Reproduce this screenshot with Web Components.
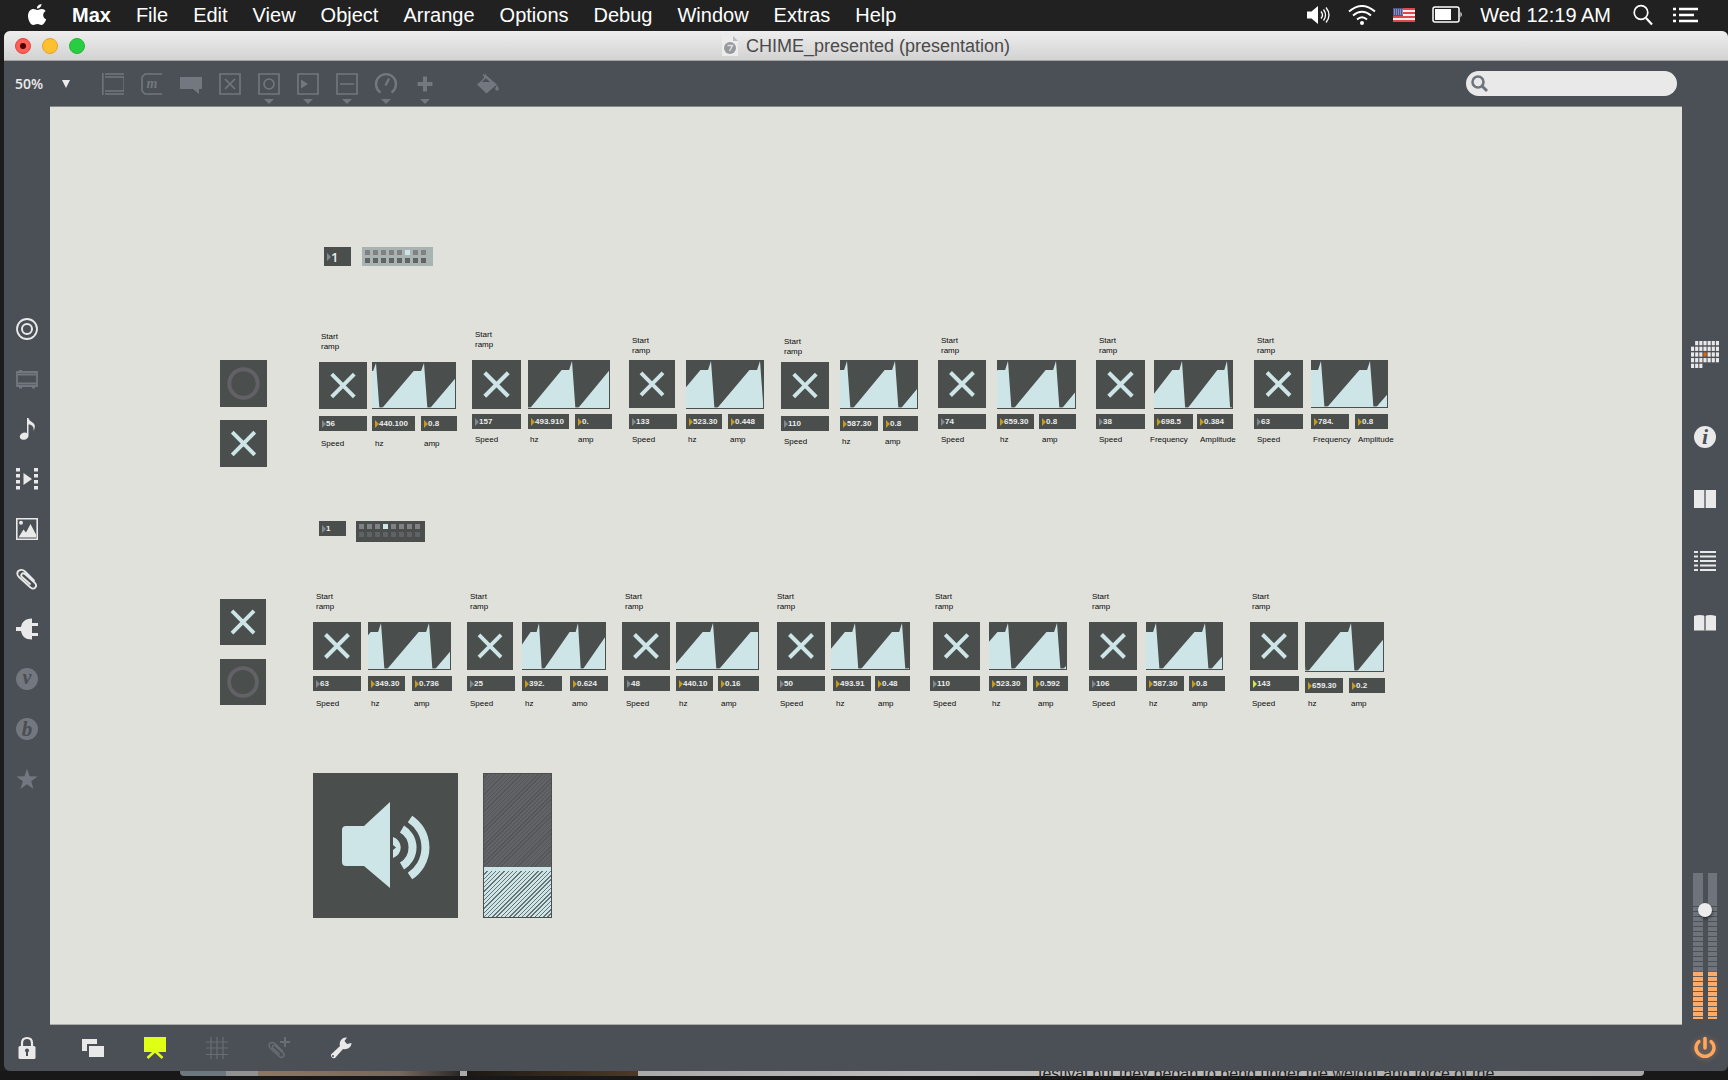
<!DOCTYPE html>
<html lang="en">
<head>
<meta charset="utf-8">
<title>CHIME_presented (presentation)</title>
<style>
html,body{margin:0;height:100%}
body{display:flex;flex-direction:column;background:#1c1c1c;overflow:hidden;font-family:"Liberation Sans",Arial,sans-serif}
max-window{flex:1;min-height:0}
</style>
</head>
<body>
<menu-bar></menu-bar>
<max-window>
  <title-bar slot="title">CHIME_presented (presentation)</title-bar>
  <tool-bar slot="tools"></tool-bar>
  <object-rail slot="left"></object-rail>
  <max-patcher slot="canvas"></max-patcher>
  <info-rail slot="right"></info-rail>
  <status-bar slot="status"></status-bar>
</max-window>
<desktop-peek>festival but they began to bend under the weight and force of the</desktop-peek>

<script>
const RESET = `:host,*{box-sizing:border-box}button,input,select{margin:0;padding:0;border:0;background:none;color:inherit;font:inherit;outline:0;appearance:none}svg{display:block}`;
const define = (name, html, setup) => customElements.define(name, class extends HTMLElement {
  connectedCallback(){
    if (this.shadowRoot) return;
    const root = this.attachShadow({mode:'open'});
    root.innerHTML = '<style>' + RESET + '</style>' + (typeof html === 'function' ? html(this) : html);
    if (setup) setup(this, root);
  }
});

const CLIP = '<path d="M18 12.500L9 3.500C6 .5 1 2 1.300 6C1.400 7 2 8 3 9L14.500 19.500C18 22.500 22 18.500 19 15L9 6C6.500 4 4 6.500 6 9L14 16" fill="none" stroke="currentColor" stroke-width="1.800" stroke-linecap="round"/>';
const letter = (ch, size, y, fill) => `<text x="11" y="${y}" text-anchor="middle" font-family="Liberation Serif,serif" font-style="italic" font-weight="700" font-size="${size}" fill="${fill}">${ch}</text>`;
const ICONS = {
  object:'<g fill="none" stroke="currentColor"><path d="M.8 0V22M3 1H22M3 4H22M3 18H22M3 21H22" stroke-width="1.500"/><path d="M21.500 4V18" stroke-width=".6"/></g>',
  message:'<path d="M21 1H4L1 4V18L4 21H21" fill="none" stroke="currentColor" stroke-width="1.500"/>' + letter('m', 14, 15, 'currentColor'),
  comment:'<path d="M0 4H22V16H19V21L13 16H0Z" fill="currentColor"/>',
  toggle:'<g fill="none" stroke="currentColor" stroke-width="1.600"><path d="M1 1H21V21H1ZM6 6L16 16M16 6L6 16"/></g>',
  button:'<g fill="none" stroke="currentColor" stroke-width="1.600"><path d="M1 1H21V21H1Z"/><circle cx="11" cy="11" r="5"/></g>',
  number:'<path d="M1 1H21V21H1Z" fill="none" stroke="currentColor" stroke-width="1.600"/><path d="M4 6.500V15.500L11 11Z" fill="currentColor"/>',
  slider:'<path d="M1 1H21V21H1ZM4 11H18" fill="none" stroke="currentColor" stroke-width="1.600"/>',
  dial:'<path d="M5.500 19.500A10 10 0 1 1 16.500 19.500M10.500 12.500L14 5.500" fill="none" stroke="currentColor" stroke-width="2.400"/>',
  plus:'<path d="M11 3.500V18.500M3.500 11H18.500" stroke="currentColor" stroke-width="4"/>',
  bucket:'<path d="M0 11.500L3 9H17L20 11.500L9.500 20.500Z" fill="currentColor"/><path d="M3 10L9.500 3.500L17 10M6 1.500L14 9M7 4.500L9 1" fill="none" stroke="currentColor" stroke-width="1.300"/><path d="M20 12C17.500 16 17.800 17.500 20 17.500S22.500 16 20 12Z" fill="currentColor"/>',
  target:'<g fill="none" stroke="currentColor"><circle cx="11" cy="11" r="10" stroke-width="1.800"/><circle cx="11" cy="11" r="5" stroke-width="2"/></g>',
  rack:'<path d="M1 4H21V18H1ZM2 6.500H20M2 15.500H20" fill="none" stroke="currentColor" stroke-width="1.800"/><path d="M3 3h3M3 19.500h3M16 19.500h3" stroke="currentColor" stroke-width="2"/>',
  note:'<path d="M11 0H12.500C13 4 19.500 4 18.800 9C18.500 11 18 12 17.500 13C18.500 8 15 6.500 12.500 6.500V17A4.500 3.600 -20 1 1 11 15Z" fill="currentColor"/>',
  film:'<path d="M0 0h4v3.500H0ZM0 6h4v3.500H0ZM0 12h4v3.500H0ZM0 18h4v3.500H0ZM18 0h4v3.500h-4ZM18 6h4v3.500h-4ZM18 12h4v3.500h-4ZM18 18h4v3.500h-4ZM7.500 5L16 11L7.500 17Z" fill="currentColor"/>',
  image:'<path d="M.8.8H21.200V21.200H.8Z" fill="none" stroke="currentColor" stroke-width="1.600"/><path d="M2.500 19.500L7.500 11.500L10 14.500L14.500 6L20 16.500V19.500Z" fill="currentColor"/><circle cx="5" cy="4.800" r="2" fill="currentColor"/>',
  clip:CLIP,
  plug:'<path d="M0 9H5C6 4 9 .5 16 .5V5H22V8H16V15H22V18H16V21.500C9 21.500 6 18 5 13H0Z" fill="currentColor"/>',
  vcircle:'<circle cx="11" cy="11" r="11" fill="currentColor"/>' + letter('v', 20, 16, '#4b4e55'),
  bcircle:'<circle cx="11" cy="11" r="11" fill="currentColor"/>' + letter('b', 21, 18, '#4b4e55'),
  star:'<path d="M11 .8L13.600 8.300L21.600 8.500L15.200 13.200L17.500 21L11 16.300L4.500 21L6.800 13.200L.4 8.500L8.400 8.300Z" fill="currentColor"/>',
  info:'<circle cx="11" cy="11" r="11" fill="currentColor"/>' + letter('i', 22, 18, '#4b4e55'),
  columns:'<path d="M0 2H10V20H0ZM12 2H22V20H12Z" fill="currentColor"/><path d="M11 2V20" stroke="#94979c" stroke-width="1.500"/>',
  list:'<path d="M0 2H4M6 2H22M0 6.500H4M6 6.500H22M0 11H4M6 11H22M0 15.500H4M6 15.500H22M0 20H4M6 20H22" stroke="currentColor" stroke-width="2"/>',
  book:'<path d="M0 4Q5 2.500 10 3.500V18.500H0ZM12 3.500Q17 2.500 22 4V18.500H12Z" fill="currentColor"/><path d="M11 4V19" stroke="#94979c" stroke-width="1.500"/>',
  lock:'<path d="M6 10V6Q6 1 11 1T16 6V10" fill="none" stroke="currentColor" stroke-width="2.200"/><rect x="2.500" y="9" width="17" height="13" rx="1.500" fill="currentColor"/><path d="M11 13V19" stroke="#4b4e55" stroke-width="2"/><circle cx="11" cy="13.500" r="2" fill="#4b4e55"/>',
  layers:'<path d="M0 2H15V7H5V14H0ZM7 9H22V20H7Z" fill="currentColor"/>',
  easel:'<path d="M0 0H22V15H0Z" fill="currentColor"/><path d="M11 14L3.500 21M11 14L18.500 21" stroke="currentColor" stroke-width="2.600"/>',
  grid:'<path d="M5 0V22M11 0V22M17 0V22M0 5H22M0 11H22M0 17.500H22" stroke="currentColor" stroke-width="1.200"/>',
  clipadd:'<g transform="translate(0 4) scale(.8)">'+CLIP+'</g><path d="M17 0V10M12 5H22" stroke="currentColor" stroke-width="2"/>',
  wrench:'<path d="M1 17.500L10 9C8.800 5 11.500 0 17 .5L14.500 4L17 7L21.500 6C21.500 10.500 17 13 13 12L5 21A3 3 0 0 1 1 17.500Z" fill="currentColor"/><circle cx="3" cy="19" r="1" fill="#4b4e55"/>',
  power:'<path d="M5 4.500A9 8.500 0 1 0 17 4.500" fill="none" stroke="currentColor" stroke-width="3.400" stroke-linecap="round"/><path d="M11 1.500V11" stroke="currentColor" stroke-width="3.600" stroke-linecap="round"/>'
};
const icon = (n, size = 22) => `<svg viewBox="0 0 22 22" width="${size}" height="${size}" overflow="visible" aria-hidden="true">${ICONS[n]}</svg>`;
const iconButton = ([n, label, tone]) => `<button class="${tone||''}" aria-label="${label}">${icon(n)}</button>`;

define('menu-bar', `<style>
:host{display:flex;justify-content:space-between;align-items:center;height:31px;flex:none;background:#212121;color:#fff;font-size:20px;line-height:24px;padding:0 30px 2px 27px}
nav,div{display:flex;align-items:center}
nav{gap:25px}
b{font-weight:700}
.apple{width:20px}
.status{gap:17px}
.clock{white-space:nowrap}
</style>
<nav aria-label="Menu">
<button class="apple" aria-label="Apple"><svg width="20" height="24" viewBox="0 0 20 24"><path d="M14.500 1C14.600 3.500 12.500 5.500 10 5.500C9.800 3.200 12 1.200 14.500 1ZM10.300 7C11.300 7 12.800 5.800 15 5.900C16.500 6 17.800 6.600 18.600 7.900C15 10 15.700 15 19.200 16.300C18.400 18.700 16.500 22 14.500 22C12.800 22 12.200 21 10.400 21C8.500 21 7.900 22 6.300 22C3.500 22 1 17 1 13C1 8.500 3.800 6 6.400 6C8.100 6 9.500 7 10.300 7Z" fill="#fff"/></svg></button>
<button><b>Max</b></button><button>File</button><button>Edit</button><button>View</button><button>Object</button><button>Arrange</button><button>Options</button><button>Debug</button><button>Window</button><button>Extras</button><button>Help</button></nav>
<div class="status">
<svg width="24" height="18" viewBox="0 0 24 18"><path d="M0 5.500H4.500L11 0V18L4.500 12.500H0Z" fill="#fff"/><path d="M14 5.500Q17 9 14 12.500M16.500 3.500Q20.500 9 16.500 14.500M19 1.500Q25 9 19 16.500" fill="none" stroke="#fff" stroke-width="1.300"/></svg>
<svg width="28" height="20" viewBox="0 0 28 20"><g fill="none" stroke="#fff" stroke-width="2"><path d="M1 6.500Q14-4.500 27 6.500M5 10.500Q14 3 23 10.500M9 14.500Q14 10 19 14.500"/></g><circle cx="14" cy="18" r="2" fill="#fff"/></svg>
<svg width="22" height="14" viewBox="0 0 22 14"><path fill="#f4f0f0" d="M0 0H22V14H0Z"/><path d="M0 1H22M0 5H22M0 9H22M0 13H22" stroke="#e0474c" stroke-width="2"/><path fill="#4f5490" d="M0 0H10V8H0Z"/><path d="M1 2H10M1 4H10M1 6H10" stroke="#c5c7e0" stroke-dasharray="1 1"/></svg>
<svg width="31" height="18" viewBox="0 0 31 18"><rect x="1" y="1" width="26" height="15" rx="2" fill="none" stroke="#fff" stroke-width="1.500"/><path d="M3 3H19V14H3ZM28.500 5.500Q31 8.500 28.500 11.500Z" fill="#fff"/></svg>
<span class="clock">Wed 12:19 AM</span>
<svg width="22" height="22" viewBox="0 0 22 22" style="margin-left:4px"><circle cx="9" cy="8.500" r="6.800" fill="none" stroke="#fff" stroke-width="1.700"/><path d="M14 14L20 20.500" stroke="#fff" stroke-width="2.200"/></svg>
<svg width="25" height="16" viewBox="0 0 25 16" style="margin-left:2px"><path d="M0 2H3M0 8H3M0 14H3M6 2H25M6 8H21M6 14H25" stroke="#fff" stroke-width="2.600"/></svg>
</div>`);

define('max-window', `<style>
:host{display:flex;flex-direction:column;margin-left:4px;border-radius:6px;overflow:hidden;background:#4b4f56}
.body{display:flex;flex:1;min-height:0}
slot[name=canvas]::slotted(*){flex:1;min-width:0}
</style><slot name="title"></slot><slot name="tools"></slot>
<div class="body"><slot name="left"></slot><slot name="canvas"></slot><slot name="right"></slot></div><slot name="status"></slot>`);

define('title-bar', `<style>
:host{display:flex;align-items:center;height:30px;flex:none;padding:0 11px;background:linear-gradient(#eee,#d2d2d2);border-bottom:1px solid #a4a4a4;color:#4a4a4a;font-size:18px;line-height:22px}
.lights{display:flex;gap:11px;flex:1}
.lights button{width:16px;height:16px;border-radius:50%;border:1px solid #e0a030;background:#ffc02f;display:grid;place-items:center}
.lights .close{background:#ff5f58;border-color:#e0443e}
.lights .close::after{content:"";width:6px;height:6px;border-radius:50%;background:#4c0202}
.lights .zoom{background:#28ce41;border-color:#24b338}
.name{display:flex;align-items:center;gap:8px;white-space:nowrap}
.end{flex:1}
</style>
<div class="lights"><button class="close" aria-label="Close"></button><button aria-label="Minimize"></button><button class="zoom" aria-label="Zoom"></button></div>
<div class="name"><svg width="16" height="20" viewBox="0 0 16 20"><path d="M0 0H11L16 5V20H0Z" fill="#ececec"/><path d="M11 0V5H16Z" fill="#bbb"/><circle cx="8" cy="12" r="6" fill="#97999c"/><path d="M5.500 9.500H10.500L7.500 15" fill="none" stroke="#ddd" stroke-width="1.500"/></svg><slot></slot></div><div class="end"></div>`);

define('tool-bar', `<style>
:host{display:flex;align-items:center;justify-content:space-between;height:45px;flex:none;padding:0 51px 0 11px;color:#73777f}
.left,.tools{display:flex;align-items:center}
.zoom{display:flex;align-items:center;color:#ececec;width:56px;margin-right:31px}
select{width:46px;font:600 14px/20px "Open Sans",sans-serif}
.tools{gap:17px}
.tools button{position:relative;width:22px;height:22px}
.more::after{content:"";position:absolute;left:6px;top:26px;border:5px solid transparent;border-top-color:currentColor;border-bottom:0}
.paint{margin-left:24px}
.search{display:flex;align-items:center;gap:4px;width:211px;height:25px;border-radius:13px;background:#e9e9e9;padding:0 8px 0 4px;color:#6f757d}
.search input{flex:1;min-width:0;font-size:14px}
</style>
<div class="left"><label class="zoom"><select aria-label="Zoom"><option>50%</option></select><svg width="10" height="8" viewBox="0 0 10 8"><path d="M1 0H9L5 8Z" fill="#ececec"/></svg></label>
<div class="tools">${[['object','Object'],['message','Message'],['comment','Comment'],['toggle','Toggle'],['button','Button','more'],['number','Number','more'],['slider','Slider','more'],['dial','Dial','more'],['plus','Add','more'],['bucket','Format','paint']].map(iconButton).join('')}</div></div>
<label class="search"><svg width="20" height="20" viewBox="0 0 20 20"><circle cx="8" cy="8" r="5.500" fill="none" stroke="currentColor" stroke-width="2.600"/><path d="M12 12L17 17" stroke="currentColor" stroke-width="3"/></svg><input type="search" aria-label="Search"></label>`);

define('object-rail', `<style>
:host{display:flex;flex-direction:column;align-items:center;gap:28px;width:46px;flex:none;padding-top:212px;color:#e9e9e9}
button{width:22px;height:22px;flex:none}.dim{color:#73777f}
</style>${[['target','All objects'],['rack','Devices','dim'],['note','Audio'],['film','Video'],['image','Images'],['clip','Clippings'],['plug','Plug-ins'],['vcircle','Vizzie','dim'],['bcircle','Beap','dim'],['star','Favorites','dim']].map(iconButton).join('')}`);

const calendar = () => {
  let s = '';
  for (let r = 0; r < 5; r++) for (let c = 0; c < 7; c++) {
    if ((r === 0 && c === 0) || (r === 4 && c > 2) || (r === 3 && c === 3 && false)) continue;
    s += `<rect x="${c*4}" y="${r*4}" width="3" height="3" fill="${r===2&&c===3?'#d8690c':'#e9e9e9'}"/>`;
  }
  return `<svg width="28" height="27" viewBox="0 0 27 19" preserveAspectRatio="none" aria-hidden="true">${s}</svg>`;
};
define('info-rail', `<style>
:host{display:flex;flex-direction:column;align-items:center;width:46px;flex:none;padding:235px 0 6px;color:#e9e9e9}
.tabs{display:flex;flex-direction:column;align-items:center;gap:40px;margin-top:58px}
button{flex:none}
.meter{position:relative;display:flex;gap:5px;height:146px;width:24px;margin-top:auto}
.bar{flex:1;display:flex;flex-direction:column}
.head{height:33px;background:#6f747c}
.off{height:65px;background:repeating-linear-gradient(#4b4f56 0 1px,#6f747c 1px 5px)}
.on{flex:1;background:repeating-linear-gradient(#6b5c51 0 1px,#ffaa66 1px 5px)}
input{position:absolute;inset:0 5px;width:14px;height:146px;writing-mode:vertical-lr;direction:rtl;background:transparent}
input::-webkit-slider-thumb{appearance:none;width:14px;height:14px;border-radius:50%;background:#ececec;box-shadow:1px 2px 3px #0006}
</style><button aria-label="Calendar">${calendar()}</button>
<div class="tabs">${[['info','Inspector'],['columns','Reference'],['list','Console'],['book','Lessons']].map(iconButton).join('')}</div>
<div class="meter"><div class="bar"><div class="head"></div><div class="off"></div><div class="on"></div></div><div class="bar"><div class="head"></div><div class="off"></div><div class="on"></div></div><input type="range" aria-label="Output level" value="77"></div>`);

define('status-bar', `<style>
:host{display:flex;align-items:center;height:46px;flex:none;padding:0 12px;color:#e9e9e9}
.modes{display:flex;gap:40px;margin-left:44px;flex:1}
button{width:22px;height:22px}.dim{color:#696d75}.lit{color:#dfff14}.power{color:#ffa75f;filter:drop-shadow(0 0 3px #ffa75f66)}
</style>${iconButton(['lock','Lock'])}<div class="modes">${[['layers','New view'],['easel','Presentation','lit'],['grid','Grid','dim'],['clipadd','Add clipping','dim'],['wrench','Tools']].map(iconButton).join('')}</div>${iconButton(['power','Audio on','power'])}`);

define('desktop-peek', `<style>
:host{display:flex;height:9px;flex:none;overflow:hidden;padding:0 84px 0 180px;font-size:16px;line-height:16px;color:#222;background:#181818}
.photo{height:5px;width:78px;background:linear-gradient(90deg,#6c777e 0 46px,#929292 46px);border-bottom-left-radius:4px}
.b{width:202px;background:linear-gradient(90deg,#8c7762,#77685c 70%,#2b2727);border-radius:0}
.c{width:7px;background:#aaa;border-radius:0}
.d{width:171px;background:linear-gradient(90deg,#1c1813,#4d3a25);border-radius:0}
.page{flex:1;height:5px;background:linear-gradient(90deg,#a9a9a9,#bebebe 30%,#aaa);padding-left:400px;border-bottom-right-radius:4px}
span{display:block;margin-top:-5px;white-space:nowrap}
</style><div class="photo"></div><div class="photo b"></div><div class="photo c"></div><div class="photo d"></div><div class="page"><span><slot></slot></span></div>`);

/* patcher objects */
define('max-toggle', el => `<style>
:host{display:grid;background:#4a4e4c}
input,svg{grid-area:1/1;width:100%;height:100%}
svg{pointer-events:none}
.off{stroke:#626266;stroke-width:4}.on{stroke:#cee5e8;stroke-width:4;display:none}
input:checked~svg .off{display:none}input:checked~svg .on{display:block}
</style><input type="checkbox" aria-label="Toggle" ${el.hasAttribute('on')?'checked':''}>
<svg viewBox="0 0 48 48" fill="none"><circle class="off" cx="24" cy="24" r="14.500"/><path class="on" d="M12.500 12.500L35.500 35.500M35.500 12.500L12.500 35.500"/></svg>`);

define('max-number', el => `<style>
:host{display:flex;align-items:center;background:#4a4e4c;color:#ececec;font-size:8px;font-weight:700;padding-left:3px;height:15px}
:host([big]){font-family:"Open Sans",sans-serif;font-size:13px;font-weight:600;height:19px}
svg{flex:none}input{flex:1;min-width:0;height:100%}
</style><svg width="4" height="8" viewBox="0 0 4 8"><path d="M0 0L4 4L0 8Z" fill="${el.getAttribute('tip')}"/></svg><input aria-label="Value" value="${el.getAttribute('value')}">`);

define('max-comment', `<style>:host{display:block;color:#0a0a0a;font-size:8px;line-height:10px;white-space:nowrap}</style><slot></slot>`);

define('max-scope', el => {
  const w = +el.getAttribute('w'), h = +el.getAttribute('h'), peak = +el.getAttribute('peak'), P = +el.getAttribute('period');
  const base = h - 1, shelf = Math.round(h * .2);
  let pts = '';
  for (let p = peak - P; p < w + P * 2; p += P)
    pts += `${p-.87*P},${base} ${p-.215*P},${shelf} ${p-.06*P},${shelf} ${p},1 ${p+.07*P},${base} `;
  return `<style>:host{display:block;background:#4a4e4c}</style>
<svg width="${w-1}" height="${h}" viewBox="0 0 ${w-1} ${h}" role="img" aria-label="Ramp"><polygon points="${pts}" fill="#cee5e8"/><path d="M0 ${base-.5}H${w}" stroke="#cee5e8" stroke-opacity=".6"/></svg>`;
});

define('max-matrix', el => `<style>
:host{display:grid;grid-template-columns:repeat(8,5px);grid-auto-rows:5px;gap:3px;padding:3px;background:#4a4e4c}
:host([pale]){background:#a9b4b2}
i{background:#7f8184}.low{background:#616266}.lit{background:#cee5e8}
</style>${Array.from({length:16},(_,i)=>`<i class="${i==el.getAttribute('lit')?'lit':i>7?'low':''}"></i>`).join('')}`);

define('max-dac', `<style>:host{display:block;background:#4a4e4c}button{display:block;width:100%}</style>
<button aria-label="Audio output"><svg viewBox="0 0 145 145" width="100%"><path d="M33 53H51L77 29V115L51 93H33Q29 93 29 89V57Q29 53 33 53Z" fill="#cee5e8"/><g fill="none" stroke="#cee5e8" stroke-width="8"><path d="M97 46A34 34 0 0 1 97 103"/><path d="M89 56A21.500 21.500 0 0 1 89 93"/></g><path d="M80 64A11 11 0 0 1 80 85V77L83 74.500L80 72Z" fill="#cee5e8"/></svg></button>`);

define('max-gain', `<style>
:host{display:grid;background:#4a4e4c;padding:1px}
.fill{grid-area:1/1;display:flex;flex-direction:column}
.off{flex:65;background:repeating-linear-gradient(135deg,#626367 0 2px,#545759 2px 3px)}
.mark{height:4px;background:#cee5e8}
.on{flex:32;background:repeating-linear-gradient(135deg,#cee5e8 0 2px,#667273 2px 3px)}
input{grid-area:1/1;width:100%;height:100%;opacity:0;writing-mode:vertical-lr;direction:rtl}
</style><div class="fill"><div class="off"></div><div class="mark"></div><div class="on"></div></div><input type="range" aria-label="Gain" value="34">`);

/* voice: toggle [x,y,w,h], scope [x,y,w,h,peak,period], numbers [x,y,w,value], start [x,y], caption y, captions [x,text] */
const VOICES = [
 [[319,362,48,47],[372,362,84,47,4,48],[[319,416,48,'56'],[372,416,43,'440.100'],[421,416,36,'0.8']],[321,332],439,[[321,'Speed'],[375,'hz'],[424,'amp']]],
 [[472,360,49,49],[528,360,82,49,44,48],[[472,414,49,'157'],[528,414,41,'493.910'],[575,414,37,'0.']],[475,330],435,[[475,'Speed'],[530,'hz'],[578,'amp']]],
 [[629,360,46,48],[686,360,78,49,25,49],[[629,414,48,'133'],[686,414,36,'523.30'],[728,414,36,'0.448']],[632,336],435,[[632,'Speed'],[688,'hz'],[730,'amp']]],
 [[781,362,48,47],[840,360,78,49,7,48],[[781,416,48,'110'],[840,416,38,'587.30'],[883,416,35,'0.8']],[784,337],437,[[784,'Speed'],[842,'hz'],[885,'amp']]],
 [[938,360,48,48],[997,360,79,49,11,48],[[938,414,48,'74'],[997,414,37,'659.30'],[1039,414,37,'0.8']],[941,336],435,[[941,'Speed'],[1000,'hz'],[1042,'amp']]],
 [[1096,360,49,49],[1154,360,79,49,28,45],[[1096,414,49,'38'],[1154,414,39,'698.5'],[1197,414,36,'0.384']],[1099,336],435,[[1099,'Speed'],[1150,'Frequency'],[1200,'Amplitude']]],
 [[1254,360,49,48],[1311,360,77,48,10,49],[[1254,414,49,'63'],[1311,414,38,'784.'],[1355,414,33,'0.8']],[1257,336],435,[[1257,'Speed'],[1313,'Frequency'],[1358,'Amplitude']]],
 [[313,622,48,48],[368,622,83,48,13,48],[[313,676,48,'63'],[368,676,37,'349.30'],[412,676,40,'0.736']],[316,592],699,[[316,'Speed'],[371,'hz'],[414,'amp']]],
 [[467,622,46,48],[522,622,84,48,17,39],[[467,676,48,'25'],[522,676,40,'392.'],[570,676,38,'0.624']],[470,592],699,[[470,'Speed'],[525,'hz'],[572,'amo']]],
 [[622,622,48,48],[676,622,83,48,37,48],[[624,676,46,'48'],[676,676,37,'440.10'],[718,676,41,'0.16']],[625,592],699,[[626,'Speed'],[679,'hz'],[721,'amp']]],
 [[777,622,48,48],[831,622,79,48,24,47],[[777,676,48,'50'],[833,676,38,'493.91'],[875,676,35,'0.48']],[777,592],699,[[780,'Speed'],[836,'hz'],[878,'amp']]],
 [[933,622,47,48],[989,622,78,48,19,49],[[930,676,50,'110'],[989,676,38,'523.30'],[1033,676,35,'0.592']],[935,592],699,[[933,'Speed'],[992,'hz'],[1038,'amp']]],
 [[1089,622,48,48],[1146,622,77,48,10,49],[[1089,676,48,'106'],[1146,676,38,'587.30'],[1189,676,36,'0.8']],[1092,592],699,[[1092,'Speed'],[1149,'hz'],[1192,'amp']]],
 [[1250,622,48,48],[1305,622,79,50,46,49],[[1250,676,49,'143'],[1305,678,38,'659.30'],[1349,678,36,'0.2']],[1252,592],699,[[1252,'Speed'],[1308,'hz'],[1351,'amp']]]
];
/* patcher coordinates are window coordinates; the canvas origin sits at 50,107 */
const at = (x, y, w, h) => `style="left:${x-50}px;top:${y-107}px${w?`;width:${w}px`:''}${h?`;height:${h}px`:''}"`;
const voice = ([t, s, nums, start, capY, caps]) =>
  `<max-comment ${at(start[0],start[1])}>Start<br>ramp</max-comment><max-toggle on ${at(...t)}></max-toggle>` +
  `<max-scope w="${s[2]}" h="${s[3]}" peak="${s[4]}" period="${s[5]}" ${at(s[0],s[1],s[2],s[3])}></max-scope>` +
  nums.map(([x,y,w,v],i) => `<max-number tip="${i ? '#c9991c' : v==='143' ? '#d3e84e' : '#85888a'}" value="${v}" ${at(x,y,w)}></max-number>`).join('') +
  caps.map(([x,c]) => `<max-comment ${at(x,capY)}>${c}</max-comment>`).join('');

define('max-patcher', `<style>
:host{display:block;position:relative;overflow:hidden;background:#e0e1db;border-top:1px solid #85888a;border-bottom:1px solid #aaaca8}
max-number,max-matrix,max-toggle,max-comment,max-scope,max-dac,max-gain{position:absolute}
</style>
<max-number big tip="#85888a" value="1" ${at(324,247,27)}></max-number>
<max-matrix pale lit="5" ${at(362,247,71,19)}></max-matrix>
<max-toggle ${at(220,360,47,47)}></max-toggle><max-toggle on ${at(220,420,47,47)}></max-toggle>
<max-number tip="#85888a" value="1" ${at(319,521,27)}></max-number>
<max-matrix lit="3" ${at(356,521,69,21)}></max-matrix>
<max-toggle on ${at(220,599,46,46)}></max-toggle><max-toggle ${at(220,659,46,46)}></max-toggle>
${VOICES.map(voice).join('')}
<max-dac ${at(313,773,145,145)}></max-dac><max-gain ${at(483,773,69,145)}></max-gain>`);
</script>
</body>
</html>
